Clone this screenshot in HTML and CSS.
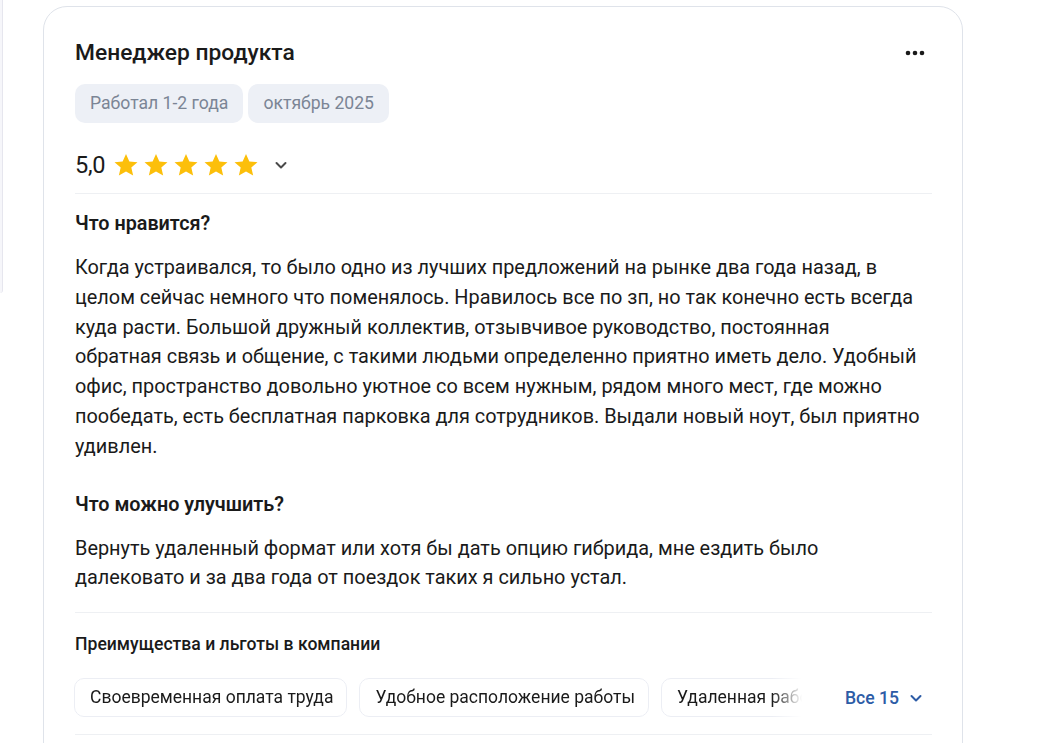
FILE: index.html
```html
<!DOCTYPE html>
<html lang="ru">
<head>
<meta charset="utf-8">
<link rel="stylesheet" href="styles.css">
</head>
<body>
<div class="page">
  <aside class="side"></aside>
  <article class="card">
    <header class="card-head">
      <h2 class="title">Менеджер продукта</h2>
      <button class="more" aria-label="Ещё">
        <svg width="20" height="6" viewBox="0 0 20 6"><circle cx="3" cy="3" r="2.3" fill="#1a1a1a"/><circle cx="10" cy="3" r="2.3" fill="#1a1a1a"/><circle cx="17" cy="3" r="2.3" fill="#1a1a1a"/></svg>
      </button>
    </header>
    <div class="tags">
      <span class="tag">Работал 1-2 года</span>
      <span class="tag">октябрь 2025</span>
    </div>
    <div class="rating">
      <span class="score">5,0</span>
      <span class="stars">
        <svg class="star" viewBox="0 0 24 24"><path d="M12 1.8l3.1 6.9 7.5.7-5.7 5 1.7 7.4L12 17.9l-6.6 3.9 1.7-7.4-5.7-5 7.5-.7z"/></svg>
        <svg class="star" viewBox="0 0 24 24"><path d="M12 1.8l3.1 6.9 7.5.7-5.7 5 1.7 7.4L12 17.9l-6.6 3.9 1.7-7.4-5.7-5 7.5-.7z"/></svg>
        <svg class="star" viewBox="0 0 24 24"><path d="M12 1.8l3.1 6.9 7.5.7-5.7 5 1.7 7.4L12 17.9l-6.6 3.9 1.7-7.4-5.7-5 7.5-.7z"/></svg>
        <svg class="star" viewBox="0 0 24 24"><path d="M12 1.8l3.1 6.9 7.5.7-5.7 5 1.7 7.4L12 17.9l-6.6 3.9 1.7-7.4-5.7-5 7.5-.7z"/></svg>
        <svg class="star" viewBox="0 0 24 24"><path d="M12 1.8l3.1 6.9 7.5.7-5.7 5 1.7 7.4L12 17.9l-6.6 3.9 1.7-7.4-5.7-5 7.5-.7z"/></svg>
      </span>
      <svg class="chev" width="16" height="16" viewBox="0 0 16 16"><path d="M3.5 6l4.5 4.5L12.5 6" fill="none" stroke="#4a4a4a" stroke-width="2" stroke-linecap="round" stroke-linejoin="round"/></svg>
    </div>
    <div class="section">
      <h3 class="sec-title">Что нравится?</h3>
      <p class="text">Когда устраивался, то было одно из лучших предложений на рынке два года назад, в<br>целом сейчас немного что поменялось. Нравилось все по зп, но так конечно есть всегда<br>куда расти. Большой дружный коллектив, отзывчивое руководство, постоянная<br>обратная связь и общение, с такими людьми определенно приятно иметь дело. Удобный<br>офис, пространство довольно уютное со всем нужным, рядом много мест, где можно<br>пообедать, есть бесплатная парковка для сотрудников. Выдали новый ноут, был приятно<br>удивлен.</p>
      <h3 class="sec-title second">Что можно улучшить?</h3>
      <p class="text">Вернуть удаленный формат или хотя бы дать опцию гибрида, мне ездить было<br>далековато и за два года от поездок таких я сильно устал.</p>
    </div>
    <div class="benefits">
      <h4 class="ben-title">Преимущества и льготы в компании</h4>
      <div class="ben-row">
        <div class="chips">
          <span class="chip">Своевременная оплата труда</span>
          <span class="chip">Удобное расположение работы</span>
          <span class="chip">Удаленная работа</span>
        </div>
        <button class="all">Все 15
          <svg width="16" height="16" viewBox="0 0 16 16"><path d="M3.5 6l4.5 4.5L12.5 6" fill="none" stroke="#2d5ca6" stroke-width="2" stroke-linecap="round" stroke-linejoin="round"/></svg>
        </button>
      </div>
    </div>
  </article>
</div>
</body>
</html>
```

FILE: styles.css
```css
* { box-sizing: border-box; }
html, body { margin: 0; padding: 0; background: #fff; }
body { font-family: Roboto, "Noto Sans", Arial, sans-serif; color: #1a1a1a; overflow: hidden; height: 743px; }

.page { display: flex; align-items: flex-start; }

.side {
  width: 3px; height: 293px; flex: none;
  background: #f6f6fa;
  border-right: 1px solid #e6e6ee;
  border-bottom-right-radius: 3px;
}

.card {
  margin: 6px 0 0 40px;
  width: 920px;
  flex: none;
  border: 1px solid #dfe3ea;
  border-radius: 24px;
  padding: 32px 30px 60px 31px;
  background: #fff;
}

.card-head { display: flex; justify-content: space-between; align-items: center; height: 28px; }
.title { margin: 0; font-size: 22.8px; font-weight: 500; line-height: 28px; color: #1a1a1a; }
.more { border: 0; background: none; padding: 0; margin-right: 7px; display: flex; }

.tags { display: flex; gap: 5px; margin-top: 17px; }
.tag {
  background: #edf0f6; color: #7b8595;
  font-size: 17.6px; line-height: 23px;
  padding: 8px 15px; border-radius: 10px;
}

.rating { display: flex; align-items: center; margin-top: 28px; height: 28px; }
.score { font-size: 23.6px; font-weight: 400; margin-right: 8px; letter-spacing: -0.3px; }
.stars { display: flex; gap: 4px; }
.star { width: 26px; height: 26px; fill: #fcbf0a; }
.chev { margin-left: 14px; }

.section { border-top: 1px solid #eef0f3; margin-top: 14px; padding-top: 17px; }
.sec-title { margin: 0; font-size: 19.8px; font-weight: 600; line-height: 26px; color: #1a1a1a; }
.sec-title.second { margin-top: 30px; }
.text { margin: 16px 0 0; font-size: 19.9px; line-height: 29.8px; color: #1a1a1a; white-space: nowrap; }

.benefits { border-top: 1px solid #eef0f3; margin-top: 19px; padding-top: 20px; border-bottom: 1px solid #eef0f3; padding-bottom: 17px; }
.ben-title { margin: 0; font-size: 17.6px; font-weight: 500; line-height: 22px; color: #1a1a1a; }
.ben-row { display: flex; align-items: center; margin-top: 23px; height: 39px; }
.chips {
  display: flex; gap: 12px; overflow: hidden; width: 731px; flex: none; margin-left: -1px;
  -webkit-mask-image: linear-gradient(to right, #000 698px, transparent 728px);
  mask-image: linear-gradient(to right, #000 698px, transparent 728px);
}
.chip {
  flex: none; white-space: nowrap;
  border: 1px solid #eceef4; border-radius: 10px;
  font-size: 17.5px; line-height: 23px; padding: 7px 13px 7px 15px;
  color: #1a1a1a;
}
.all {
  margin-left: 40px; border: 0; background: none; padding: 0;
  display: flex; align-items: center; gap: 9px;
  font-family: inherit; font-size: 17.6px; font-weight: 500; color: #2d5ca6;
}
```
